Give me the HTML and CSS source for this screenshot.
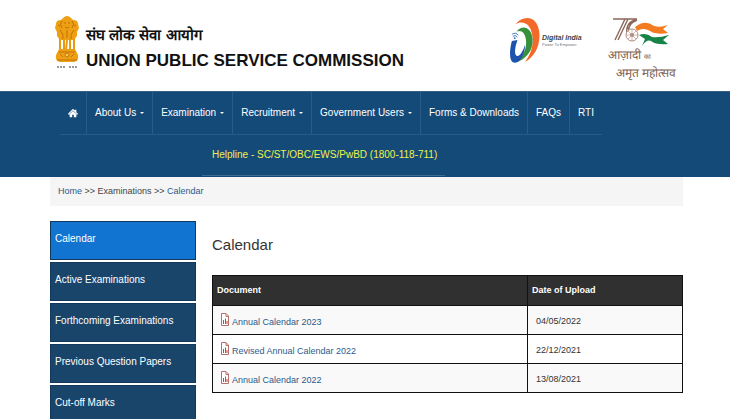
FILE: index.html
```html
<!DOCTYPE html>
<html lang="en">
<head>
  <meta charset="UTF-8">
  <meta name="viewport" content="width=device-width, initial-scale=1">
  <title>Calendar | UPSC</title>
  <link rel="stylesheet" href="styles.css">
</head>
<body>
  <!-- HEADER -->
  <header class="site-header">
    <svg class="emblem" viewBox="0 0 26 56" role="img" aria-label="State Emblem of India">
      <path fill="#eda012" d="M9 3 Q13 -1 17 3 L19 5 Q24 5 24 9 L25 13 L23 17 L23 21 L20 25 L6 25 L3 21 L3 17 L1 13 L2 9 Q2 5 7 5 Z"/>
      <path fill="none" stroke="#c2700a" stroke-width="1" d="M8 6 Q5 9 8 13 M18 6 Q21 9 18 13 M10 8 L12 8 M14 8 L16 8 M11 12 Q13 14 15 12 M6 15 Q10 19 9 24 M20 15 Q16 19 17 24 M13 15 V23 M4 10 L6 11 M22 10 L20 11"/>
      <path fill="none" stroke="#e89a10" stroke-width="2" d="M6 24 V36 M10 24 V35 M13 25 L12 35 M16 24 V35 M20 24 V36"/>
      <path fill="#eda012" d="M5 34 H21 L24 40 Q25 46 20 47 H6 Q1 46 2 40 Z"/>
      <path fill="none" stroke="#c2700a" stroke-width="1" d="M5 37 H21 M3 45 H23 M6 39 L9 42 M20 39 L17 42"/>
      <circle cx="13" cy="40" r="2" fill="#f9c65a" stroke="#c2700a"/>
      <path stroke="#999" stroke-width="2" stroke-dasharray="2 1" d="M3 52 H12 M15 52 H23"/>
    </svg>
    <div class="brand">
      <p class="brand-hindi" lang="hi">संघ लोक सेवा आयोग</p>
      <h1 class="brand-name">UNION PUBLIC SERVICE COMMISSION</h1>
    </div>
    <div class="digital-india">
      <svg class="digital-mark" viewBox="0 0 34 52" aria-hidden="true">
        <path fill="#f2692a" d="M6 8 C14 -2 29 -1 31 16 C33 31 25 44 16 48 C23 39 26 28 23 17 C21 7 13 4 6 8Z"/>
        <path fill="#37913b" d="M7 16 C13 8 23 11 24 24 C25 37 16 46 6 49 C14 43 18 34 17 25 C16 17 12 14 7 16Z"/>
        <path fill="#1d53ad" d="M2 26 L8 25 C5 33 4 42 8 42 C11 42 14 36 16 30 C16 40 11 49 5 49 C-1 49 -1 37 2 26Z"/>
        <path fill="none" stroke="#3b70bd" stroke-width="1" d="M2 19 Q6 16 9 20 M3 21 Q6 19 8 22"/>
        <circle cx="5" cy="23" r="1" fill="#3b70bd"/>
      </svg>
      <div>
        <p class="digital-name">Digital India</p>
        <p class="digital-tag">Power To Empower</p>
      </div>
    </div>
    <div class="amrit">
      <svg class="amrit-mark" viewBox="0 0 64 32" aria-hidden="true">
        <path fill="none" stroke="#8a675a" stroke-width="1.4" d="M5 4 H29 M17 4 L7 25 M20 4 L10 25 M27 5 C20 7 18 13 19 20 M29 5 C22 8 20 12 21 16"/>
        <path fill="#f47c20" d="M27 12 Q37 4 46 11 Q52 13 60 10 L55 14 L60 18 Q48 20 42 16 Q35 12 29 16Z"/>
        <path fill="#fff" d="M30 16 Q37 13 44 18 L57 20 L52 22 Q44 22 38 20Z"/>
        <path fill="#168447" d="M31 20 Q38 17 44 22 Q51 23 61 20 L55 25 L60 29 Q48 30 43 26 Q39 24 34 31 L37 24Z"/>
        <circle cx="24" cy="20" r="6" fill="#fff" stroke="#b18e82"/>
        <circle cx="24" cy="20" r="2" fill="#b18e82"/>
        <path stroke="#b18e82" stroke-width=".6" d="M24 14 V26 M18 20 H30 M20 16 L28 24 M28 16 L20 24"/>
      </svg>
      <p class="amrit-text" lang="hi">आज़ादी <small>का</small></p>
      <p class="amrit-text amrit-second" lang="hi">अमृत महोत्सव</p>
    </div>
  </header>

  <!-- NAVIGATION -->
  <nav class="main-nav">
    <ul class="nav-list">
      <li><a href="#" aria-label="Home"><svg class="home-icon" viewBox="0 0 12 10" aria-hidden="true"><path fill="#fff" d="M6 0 L8 2 V1 H10 V4 L12 6 L11 7 H10 V10 H7 V7 H5 V10 H2 V7 H1 L0 6Z"/><path fill="none" stroke="#144a78" stroke-width=".6" d="M1.5 6.5 L6 2.3 L10.500 6.500"/></svg></a></li>
      <li><a href="#" class="has-menu">About Us</a></li>
      <li><a href="#" class="has-menu">Examination</a></li>
      <li><a href="#" class="has-menu">Recruitment</a></li>
      <li><a href="#" class="has-menu">Government Users</a></li>
      <li><a href="#">Forms &amp; Downloads</a></li>
      <li><a href="#">FAQs</a></li>
      <li><a href="#">RTI</a></li>
    </ul>
    <a href="#" class="helpline">Helpline - SC/ST/OBC/EWS/PwBD (1800-118-711)</a>
  </nav>

  <div class="container">
    <!-- BREADCRUMB -->
    <div class="breadcrumb">
      <a href="#">Home</a> &gt;&gt; <span>Examinations</span> &gt;&gt; <a href="#">Calendar</a>
    </div>

    <div class="columns">
      <!-- SIDEBAR -->
      <aside class="sidebar">
        <a href="#" class="active">Calendar</a>
        <a href="#">Active Examinations</a>
        <a href="#">Forthcoming Examinations</a>
        <a href="#">Previous Question Papers</a>
        <a href="#">Cut-off Marks</a>
      </aside>

      <!-- MAIN CONTENT -->
      <main>
        <h2 class="page-title">Calendar</h2>
        <table class="documents">
          <thead>
            <tr><th class="col-document">Document</th><th>Date of Upload</th></tr>
          </thead>
          <tbody>
            <tr>
              <td><a href="#"><svg class="file-icon" viewBox="0 0 8 13" aria-hidden="true"><use href="#file"/></svg>Annual Calendar 2023</a></td>
              <td>04/05/2022</td>
            </tr>
            <tr>
              <td><a href="#"><svg class="file-icon" viewBox="0 0 8 13" aria-hidden="true"><use href="#file"/></svg>Revised Annual Calendar 2022</a></td>
              <td>22/12/2021</td>
            </tr>
            <tr>
              <td><a href="#"><svg class="file-icon" viewBox="0 0 8 13" aria-hidden="true"><use href="#file"/></svg>Annual Calendar 2022</a></td>
              <td>13/08/2021</td>
            </tr>
          </tbody>
        </table>
      </main>
    </div>
  </div>

  <!-- Shared document icon -->
  <svg class="sprite" aria-hidden="true">
    <symbol id="file" viewBox="0 0 8 13">
      <path fill="#fff" stroke="#b5706c" d="M.5 .5 H5 L7.5 3 V12.5 H.5Z"/>
      <path fill="none" stroke="#b5706c" d="M5 1 V3.5 H7"/>
      <path stroke="#d33e3a" d="M2.5 11 V7 M4.5 11 V5.5 M6 11 V8"/>
    </symbol>
  </svg>
</body>
</html>
```
FILE: styles.css
```css
* {
  margin: 0;
  padding: 0;
  box-sizing: border-box;
}
body {
  font-family: "Liberation Sans", Arial, sans-serif;
  font-size: 10px;
  line-height: 16px;
  color: #333;
  background-color: #fff;
}
a {
  color: #2c5a8c;
  text-decoration: none;
}

/* Header */
.site-header {
  display: flex;
  align-items: flex-start;
  height: 91px;
  padding: 15px 52px 0 54px;
}
.emblem {
  width: 26px;
  height: 56px;
  margin-right: 6px;
}
.brand {
  flex: 1;
  padding-top: 8px;
  color: #111;
  white-space: nowrap;
}
.brand-hindi {
  font-size: 15px;
  font-weight: bold;
  line-height: 24px;
}
.brand-name {
  font-size: 17px;
  line-height: 28px;
}
.digital-india {
  display: flex;
  align-items: center;
  width: 98px;
  white-space: nowrap;
}
.digital-mark {
  flex: none;
  width: 32px;
  height: 52px;
}
.digital-name {
  font-size: 7px;
  font-weight: bold;
  font-style: italic;
  line-height: 8px;
  color: #444;
}
.digital-tag {
  font-size: 4px;
  line-height: 6px;
  color: #777;
}
.amrit {
  width: 70px;
}
.amrit-mark {
  display: block;
  width: 64px;
  height: 32px;
}
.amrit-text {
  font-size: 12px;
  line-height: 16px;
  color: #806252;
  white-space: nowrap;
}
.amrit-text small {
  font-size: 7px;
}
.amrit-second {
  padding-left: 8px;
}

/* Navigation */
.main-nav {
  height: 86px;
  padding: 0 60px;
  background-color: #144a78;
  border-top: 1px solid #336184;
}
.nav-list {
  display: flex;
  width: max-content;
  list-style: none;
  border-bottom: 1px solid #285c8a;
}
.nav-list li + li {
  border-left: 1px solid #285c8a;
}
.nav-list a {
  display: flex;
  align-items: center;
  height: 42px;
  padding: 0 8px;
  color: #fff;
}
.home-icon {
  width: 10px;
  height: 10px;
}
.has-menu::after {
  content: "";
  margin-left: 4px;
  border: 2px solid transparent;
  border-top-color: #fff;
  border-bottom: 0;
}
.helpline {
  display: block;
  width: max-content;
  margin-left: 142px;
  padding: 0 8px 0 10px;
  line-height: 40px;
  color: #f0f04a;
  border-bottom: 1px solid #3c6c92;
}

/* Content */
.container {
  padding: 0 47px 0 50px;
}
.breadcrumb {
  padding: 6px 8px 7px;
  margin: 0 0 15px;
  font-size: 9px;
  background-color: #f5f5f5;
  color: #444;
}
.columns {
  display: grid;
  grid-template-columns: 146px 1fr;
  gap: 16px;
}
.sidebar {
  display: flex;
  flex-direction: column;
  gap: 2px;
}
.sidebar a {
  height: 39px;
  padding: 0 4px;
  line-height: 34px;
  color: #fff;
  background-color: #19456b;
  border: 1px solid #12395c;
  white-space: nowrap;
}
.sidebar .active {
  background-color: #1274d1;
}
.page-title {
  margin: 10px 0 16px;
  font-size: 15px;
  font-weight: normal;
  line-height: 28px;
}
.documents {
  width: 100%;
  border-collapse: collapse;
  font-size: 9px;
}
.documents th,
.documents td {
  border: 1px solid #111;
  text-align: left;
}
.documents th {
  height: 30px;
  padding: 0 4px 2px;
  color: #fff;
  background-color: #303030;
}
.documents td {
  height: 29px;
  padding: 2px 8px 0;
}
.documents tbody tr:nth-child(odd) {
  background-color: #f9f9f9;
}
.col-document {
  width: 67%;
}
.file-icon {
  width: 8px;
  height: 13px;
  margin-right: 3px;
  vertical-align: -1px;
}
.sprite {
  display: none;
}
```
